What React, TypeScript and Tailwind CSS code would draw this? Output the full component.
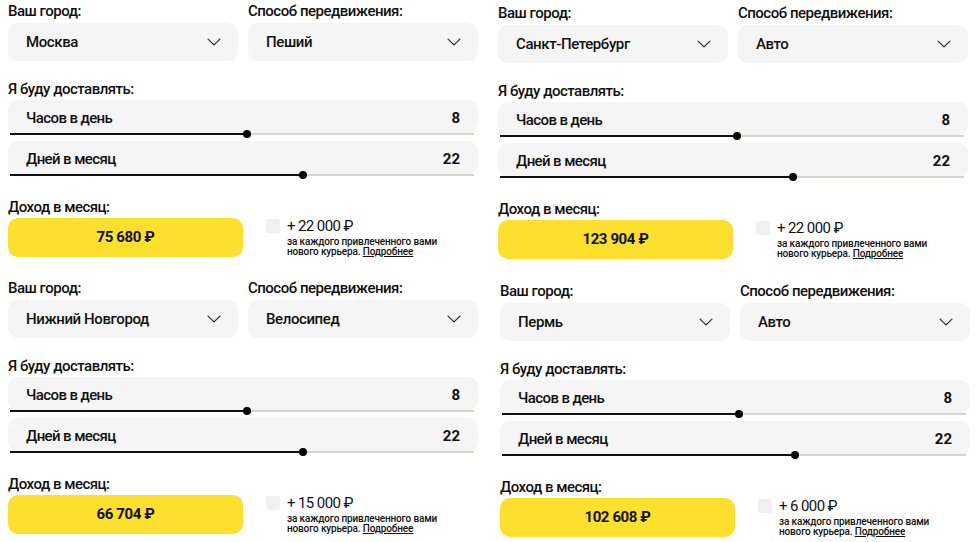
import React from "react";

type PanelProps = {
  city: string;
  transport: string;
  income: string;
  bonus: string;
  cls: string;
};

function Chevron() {
  return (
    <svg width="14" height="8" viewBox="0 0 14 8" fill="none" className="shrink-0">
      <path d="M1 1.2 L7 6.8 L13 1.2" stroke="#222" strokeWidth="1.15" strokeLinecap="round" strokeLinejoin="round" />
    </svg>
  );
}

function Select({ value }: { value: string }) {
  return (
    <div className="flex h-[38px] w-[230px] items-center justify-between rounded-[10px] bg-[#f5f5f5] pl-[18px] pr-[17px]">
      <span className="text-[15px] font-medium tracking-[-0.4px] text-[#111]">{value}</span>
      <Chevron />
    </div>
  );
}

function Slider({ label, value, pct }: { label: string; value: string; pct: number }) {
  return (
    <div className="relative flex h-[34px] w-[470px] items-center justify-between rounded-[10px] bg-[#f5f5f5] pl-[18px] pr-[18px] pt-[2px]">
      <span className="text-[15px] font-medium tracking-[-0.6px] text-[#111]">{label}</span>
      <span className="text-[15px] font-bold text-[#111]">{value}</span>
      <div className="absolute bottom-[-1px] left-[2px] right-[4px] h-[2px] bg-[#d6d6cf]">
        <div className="absolute left-0 top-0 h-[2px] bg-[#111]" style={{ width: `${pct}%` }} />
        <div
          className="absolute top-[-3px] h-[8px] w-[8px] -translate-x-1/2 rounded-full bg-black"
          style={{ left: `${pct}%` }}
        />
      </div>
    </div>
  );
}

const labelCls = "text-[15px] font-medium leading-[22px] tracking-[-0.5px] text-[#111]";

function Panel({ city, transport, income, bonus, cls }: PanelProps) {
  return (
    <div className={cls}>
      <div className="flex gap-[10px] pl-[8px]">
        <div className="flex flex-col">
          <div className={`h-[23px] ${labelCls}`}>Ваш город:</div>
          <Select value={city} />
        </div>
        <div className="flex flex-col">
          <div className={`h-[23px] ${labelCls}`}>Способ передвижения:</div>
          <Select value={transport} />
        </div>
      </div>
      <div className="mt-[17px] flex flex-col pl-[8px]">
        <div className={`h-[22px] ${labelCls}`}>Я буду доставлять:</div>
        <div className="flex flex-col gap-[7px]">
          <Slider label="Часов в день" value="8" pct={51} />
          <Slider label="Дней в месяц" value="22" pct={63.2} />
        </div>
      </div>
      <div className="mt-[21px] flex flex-col pl-[8px]">
        <div className={`h-[22px] ${labelCls}`}>Доход в месяц:</div>
        <div className="flex items-start">
          <div className="flex h-[39px] w-[235px] items-center justify-center rounded-[10px] bg-[#fddf2e] text-[15px] font-bold tracking-[-0.4px] text-[#111]">
            {income}
          </div>
          <div className="ml-[23px] mt-[1px] h-[14px] w-[14px] rounded-[3px] bg-[#f0f0f0]" />
          <div className="ml-[7px] flex flex-col">
            <div className="h-[16px] text-[15px] font-normal leading-[16px] tracking-[-0.6px] text-[#111]">{bonus}</div>
            <div className="mt-[3px] text-[10px] font-medium leading-[10px] tracking-[-0.15px] text-[#111]">
              за каждого привлеченного вами
              <br />
              нового курьера. <span className="underline">Подробнее</span>
            </div>
          </div>
        </div>
      </div>
    </div>
  );
}

export default function App() {
  return (
    <div className="h-[542px] w-[976px] overflow-hidden bg-white font-[Roboto,'Noto_Sans',sans-serif]">
      <div className="grid grid-cols-[490px_486px] grid-rows-[277px_265px]">
        <Panel cls="pt-0" city="Москва" transport="Пеший" income="75 680 ₽" bonus="+ 22 000 ₽" />
        <Panel cls="pt-[2px]" city="Санкт-Петербург" transport="Авто" income="123 904 ₽" bonus="+ 22 000 ₽" />
        <Panel cls="pt-0" city="Нижний Новгород" transport="Велосипед" income="66 704 ₽" bonus="+ 15 000 ₽" />
        <Panel cls="pt-[3px] pl-[2px]" city="Пермь" transport="Авто" income="102 608 ₽" bonus="+ 6 000 ₽" />
      </div>
    </div>
  );
}
